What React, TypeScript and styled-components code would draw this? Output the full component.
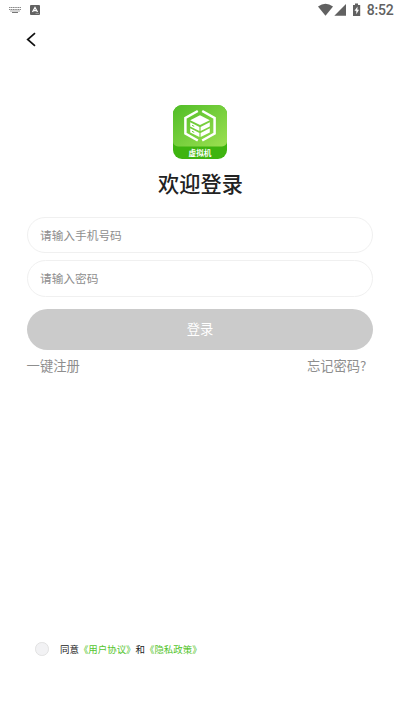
import React, { useState } from "react";
import styled, { createGlobalStyle } from "styled-components";

const GlobalStyle = createGlobalStyle`
  * { box-sizing: border-box; }
  body { margin: 0; background: #fff; }
  button, input { font: inherit; border: 0; padding: 0; background: none; }
`;

const Screen = styled.main`
  display: flex;
  flex-direction: column;
  width: 100%;
  height: 711px;
  overflow: hidden;
  background: #fff;
  color: #222;
  font-family: "Noto Sans CJK SC", "Noto Sans", sans-serif;
`;

const StatusBar = styled.header`
  display: flex;
  justify-content: space-between;
  height: 20px;
  padding: 0 6.4px 0 9px;
  color: #616161;
`;

const Notifications = styled.div`
  display: flex;
  align-items: center;
  gap: 9px;
`;

const SystemIcons = styled.div`
  display: flex;
  align-items: center;
`;

const Clock = styled.time`
  margin-left: 6px;
  font: 500 14px/20px Roboto, sans-serif;
  letter-spacing: -0.2px;
`;

const Navigation = styled.nav`
  display: flex;
  height: 40px;
  padding: 12px 0 0 25px;
`;

const BackButton = styled.button`
  display: flex;
  width: 12px;
  height: 15px;
  color: #111;
`;

const Brand = styled.section`
  display: flex;
  flex-direction: column;
  align-items: center;
  height: 157px;
  padding-top: 45px;
`;

const Logo = styled.svg`
  width: 54px;
  height: 54px;
  flex: none;
`;

const Title = styled.h1`
  margin: 8px 0 0 1px;
  font-size: 21.2px;
  line-height: 32px;
  font-weight: 500;
`;

const Form = styled.form`
  display: flex;
  flex-direction: column;
  padding: 0 26.6px;
`;

const Field = styled.input<{ $height: number }>`
  && {
    width: 100%;
    height: ${({ $height }) => $height}px;
    margin-bottom: 7px;
    padding: 0 12.4px 2px;
    border: 1px solid #f0f0f0;
    border-radius: 19px;
    font-size: 11.7px;
    outline: none;
  }
  &::placeholder { color: #8e8e8e; opacity: 1; }
`;

const LoginButton = styled.button`
  && {
    height: 41px;
    margin-top: 5px;
    padding-bottom: 2px;
    border-radius: 21px;
    background: #cbcbcb;
    color: #fff;
    font-size: 13.3px;
  }
`;

const Links = styled.div`
  display: flex;
  justify-content: space-between;
  padding: 6px 7px 0 0;
`;

const TextLink = styled.button`
  color: #8e8e8e;
  && { font-size: 13.3px; line-height: 20px; }
`;

const Agreement = styled.footer`
  display: flex;
  align-items: center;
  margin: auto 0 54px 35px;
  height: 16px;
  font-size: 9.45px;
  line-height: 16px;
  white-space: nowrap;
`;

const Check = styled.button<{ $checked: boolean }>`
  && {
    width: 13.5px;
    height: 13.5px;
    margin-right: 11.5px;
    border: 1px solid #e2e2e2;
    border-radius: 50%;
    background: ${({ $checked }) => ($checked ? "#55c52d" : "#f2f2f4")};
  }
`;

const Policy = styled.span`
  color: #55c52d;
`;

function BrandLogo() {
  return (
    <Logo viewBox="0 0 54 54">
      <defs>
        <linearGradient id="tile" x1="0" y1="0" x2="1" y2="1">
          <stop offset="0" stopColor="#50bd27" />
          <stop offset="1" stopColor="#9ce051" />
        </linearGradient>
        <clipPath id="rounded"><rect width="54" height="54" rx="9" /></clipPath>
      </defs>
      <g clipPath="url(#rounded)">
        <rect width="54" height="54" fill="#3eb40f" />
        <rect width="54" height="41.5" rx="5" fill="url(#tile)" />
      </g>
      <g fill="none" stroke="#fff" strokeWidth="2.5">
        <path d="M24.8 6 12.4 13v15.5l12.4 7" />
        <path d="M29.2 6l12.4 7v15.5l-12.4 7" />
      </g>
      <g fill="#fff">
        <path d="m27 10.3 9.8 4.9-9.8 4.9-9.8-4.9z" />
        <path d="m17.2 17.3 9.2 4.6v4.2l-9.2-4.6zM17.2 23.3l9.2 4.6v4.2l-9.2-4.6z" />
        <path d="m36.8 17.3-9.2 4.6v4.2l9.2-4.6zM36.8 23.3l-9.2 4.6v4.2l9.2-4.6z" />
      </g>
      <path d="m19 20.3 2.2 1.1M19 26.3l2.2 1.1" stroke="#6ece3a" strokeWidth="1" />
      <text x="27" y="50.8" textAnchor="middle" fill="#fff" fontSize="7.6" fontWeight="700">虚拟机</text>
    </Logo>
  );
}

function KeyboardIcon() {
  return (
    <svg width="12" height="8" viewBox="0 0 12 8">
      <path d="M0 1.5h12M0 3.5h12" stroke="#8a8a8a" strokeDasharray="1.4 .4" />
      <path d="M1 5h10" stroke="#aaa" />
      <path d="M3 6.5h6" stroke="#777" />
    </svg>
  );
}

function InputMethodIcon() {
  return (
    <svg width="10" height="10" viewBox="0 0 10 10">
      <rect width="10" height="10" rx="1" fill="#626262" />
      <path d="M2.5 7 5 2.5 7.5 7M3.8 5.7h2.5" fill="none" stroke="#fff" strokeWidth="1.3" />
      <path d="M5.5 8.5H9" stroke="#aaa" strokeWidth=".7" />
    </svg>
  );
}

function DeviceIcons() {
  return (
    <svg width="43" height="14" viewBox="0 0 43 14" fill="currentColor">
      <path d="M0 3.4Q7.5-1.8 15 3.4L7.5 12.7Z" />
      <path d="M28 1v11.7H16.3z" />
      <path d="M35 2h2V.5h3V2h2.2v11H35z" />
      <path d="m39.5 3.5-3 4.3h1.8v3.5l2.7-4.5h-1.6z" fill="#fff" />
    </svg>
  );
}

export default function App() {
  const [checked, setChecked] = useState(false);
  return (
    <>
      <GlobalStyle />
      <Screen>
        <StatusBar>
          <Notifications>
            <KeyboardIcon />
            <InputMethodIcon />
          </Notifications>
          <SystemIcons>
            <DeviceIcons />
            <Clock>8:52</Clock>
          </SystemIcons>
        </StatusBar>
        <Navigation>
          <BackButton aria-label="返回">
            <svg width="12" height="15" viewBox="0 0 12 15" fill="none">
              <path d="M10 1.2 2.7 7.5l7.3 6.3" stroke="currentColor" strokeWidth="1.7" />
            </svg>
          </BackButton>
        </Navigation>
        <Brand>
          <BrandLogo />
          <Title>欢迎登录</Title>
        </Brand>
        <Form onSubmit={(event) => event.preventDefault()}>
          <Field $height={36} type="tel" placeholder="请输入手机号码" />
          <Field $height={37} type="password" placeholder="请输入密码" />
          <LoginButton type="submit">登录</LoginButton>
          <Links>
            <TextLink type="button">一键注册</TextLink>
            <TextLink type="button">忘记密码?</TextLink>
          </Links>
        </Form>
        <Agreement>
          <Check type="button" $checked={checked} onClick={() => setChecked(!checked)} />
          <span>同意<Policy>《用户协议》</Policy>和<Policy>《隐私政策》</Policy></span>
        </Agreement>
      </Screen>
    </>
  );
}
